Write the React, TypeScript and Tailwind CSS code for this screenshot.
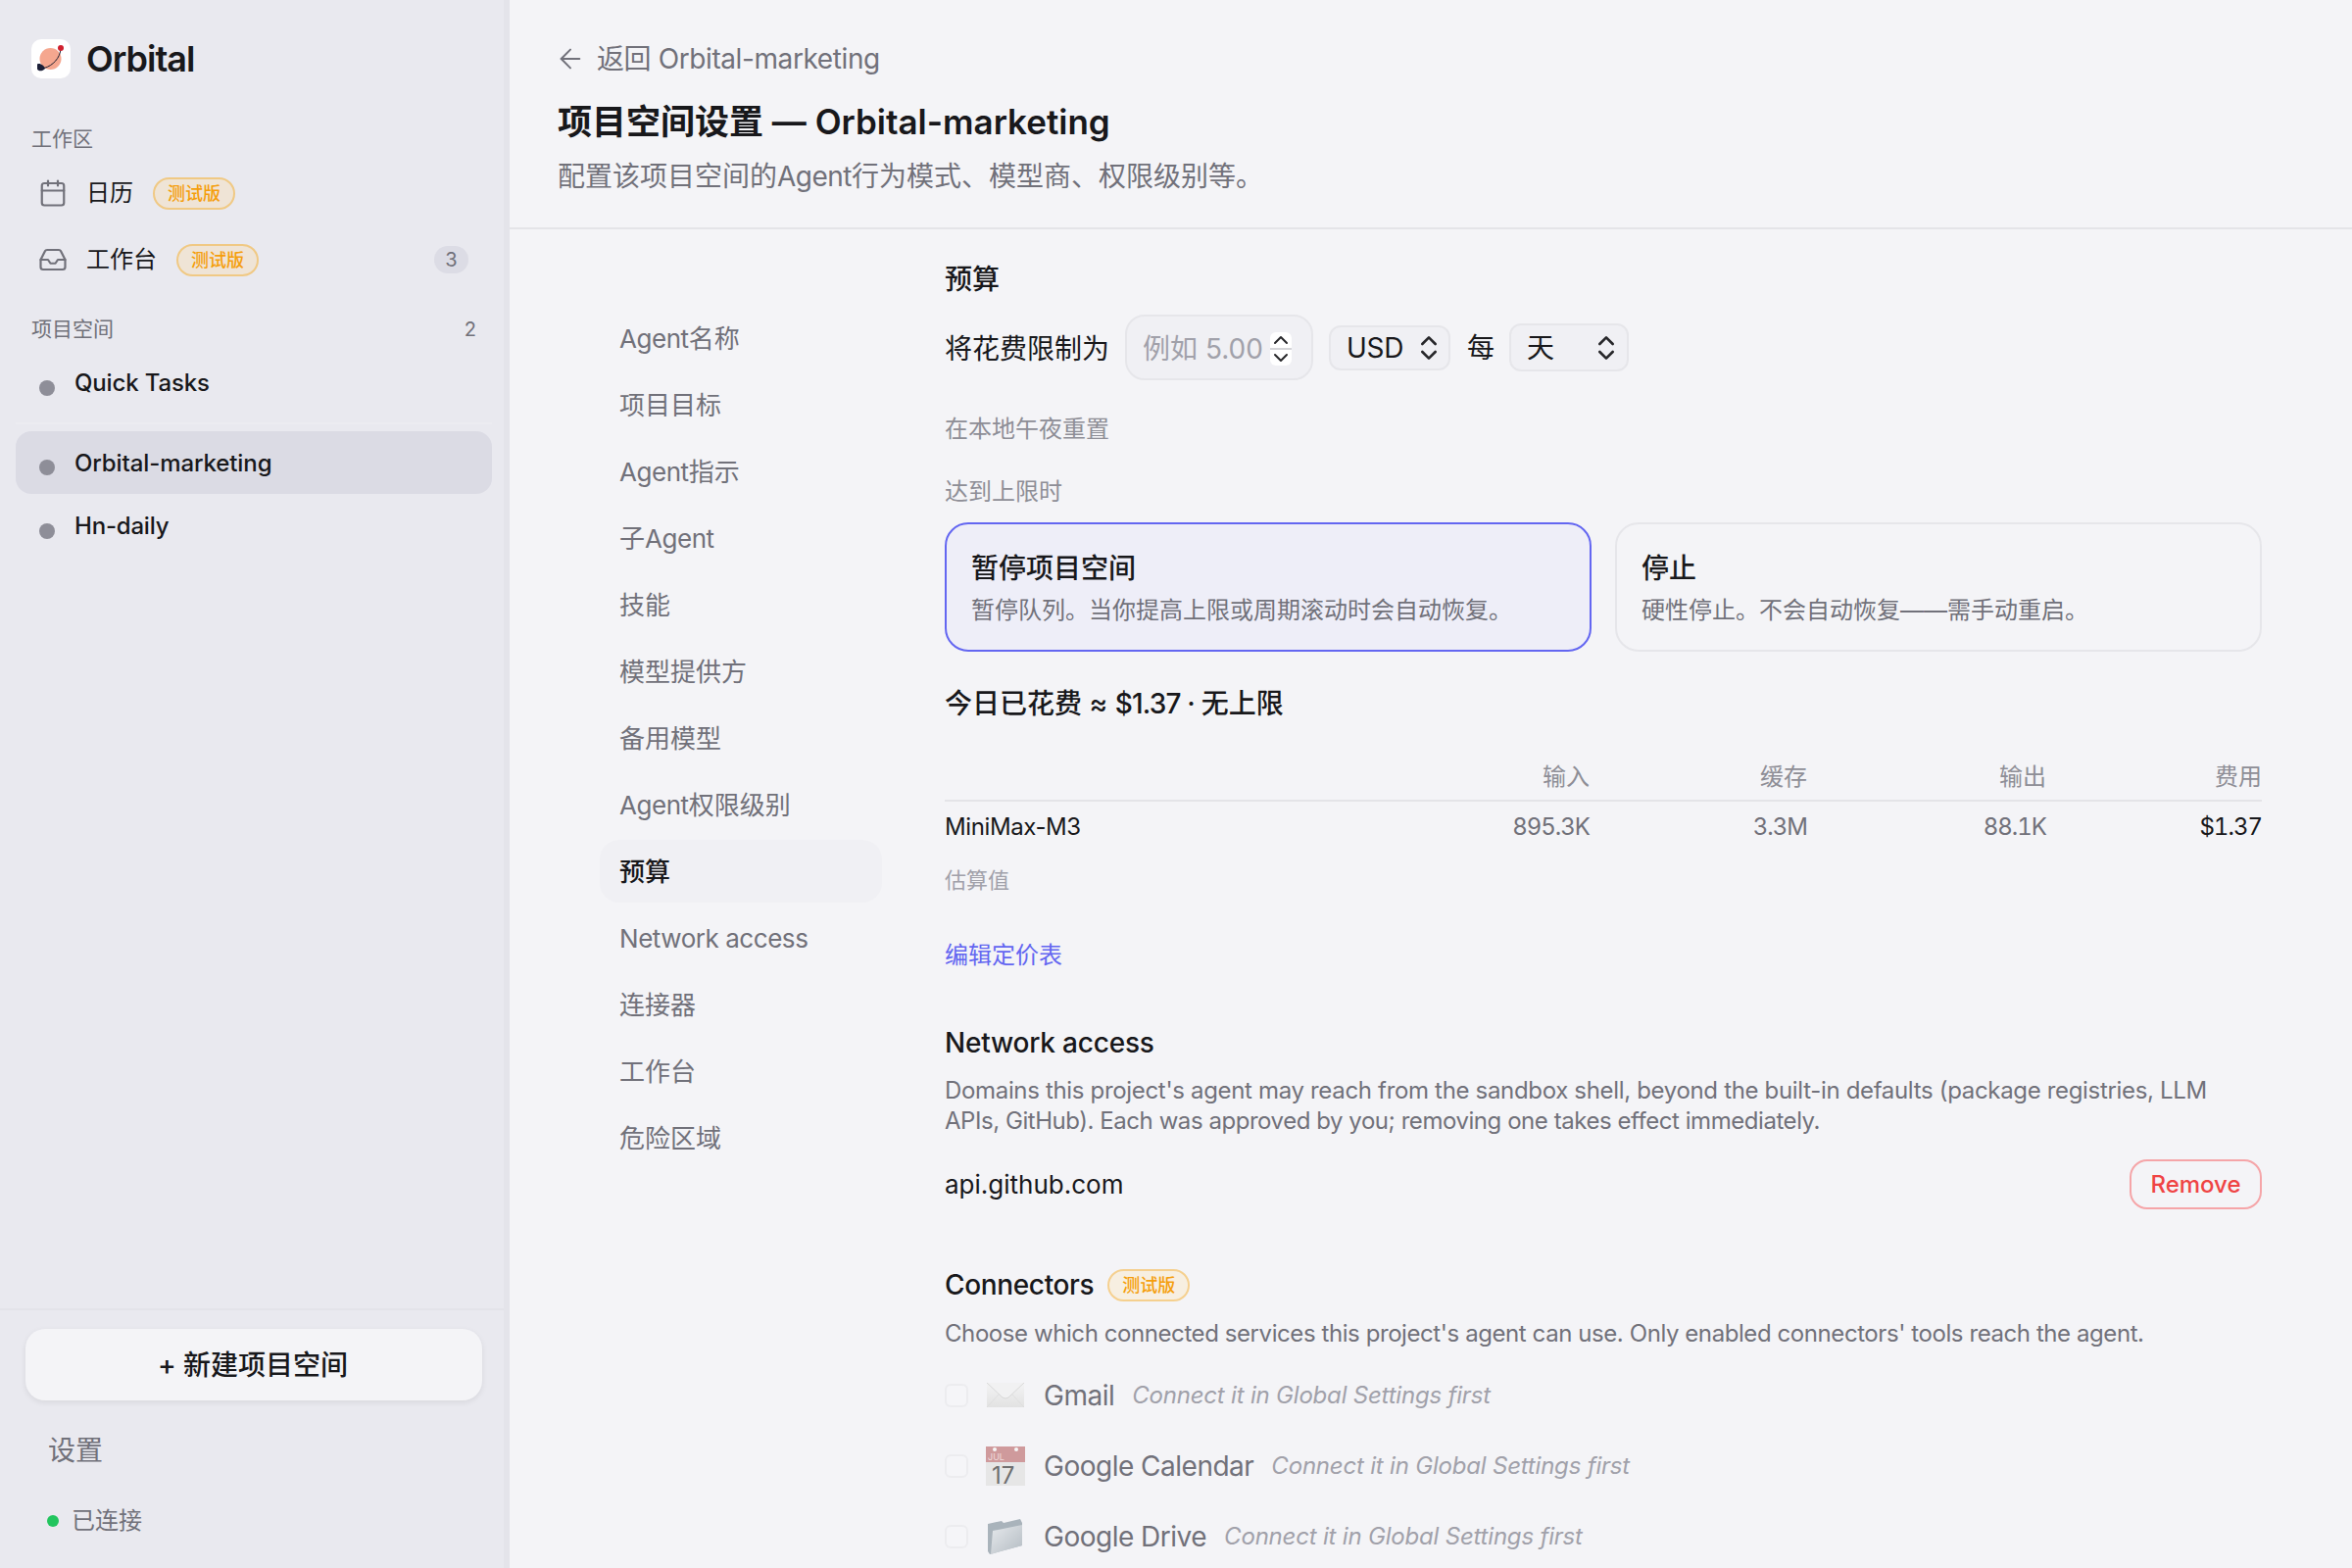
// App.tsx
// Project space settings page (budget section) with workspace sidebar

import { ArrowLeft, Calendar, ChevronDown, ChevronUp, ChevronsUpDown, Inbox } from "lucide-react";

const NAV_ITEMS = [
  { before: "", latin: "Agent", rest: "名称" },
  { before: "", latin: "", rest: "项目目标" },
  { before: "", latin: "Agent", rest: "指示" },
  { before: "子", latin: "Agent", rest: "" },
  { before: "", latin: "", rest: "技能" },
  { before: "", latin: "", rest: "模型提供方" },
  { before: "", latin: "", rest: "备用模型" },
  { before: "", latin: "Agent", rest: "权限级别" },
  { before: "", latin: "", rest: "预算" },
  { before: "", latin: "Network access", rest: "" },
  { before: "", latin: "", rest: "连接器" },
  { before: "", latin: "", rest: "工作台" },
  { before: "", latin: "", rest: "危险区域" },
];

function BetaBadge({ light = false }: { light?: boolean }) {
  return (
    <span
      className={
        light
          ? "flex h-[33px] w-[84px] shrink-0 items-center justify-center rounded-full border-2 border-[#f5d08f] bg-[#f7efe1] text-[18px] font-medium text-[#f59e0b]"
          : "flex h-[33px] w-[84px] shrink-0 items-center justify-center rounded-full border-2 border-[#f0c984] bg-[#efe4d6] text-[18px] font-medium text-[#f59e0b]"
      }
    >
      测试版
    </span>
  );
}

function OrbitalLogo() {
  return (
    <svg width="40" height="40" viewBox="0 0 40 40" className="shrink-0">
      <rect width="40" height="40" rx="10" fill="#ffffff" />
      <circle cx="19.5" cy="20" r="11" fill="#f5a78f" />
      <path d="M30 9.5C29.5 19 22 27 13 29.5" fill="none" stroke="#1e1e2e" strokeWidth="1" />
      <path d="M6 25.5C9 24 13 27 14 30C11.5 33 7 33 6 30.5Z" fill="#1c2038" />
      <circle cx="30" cy="9" r="3" fill="#d0202e" />
    </svg>
  );
}

function EnvelopeIcon() {
  return (
    <svg width="40" height="26" viewBox="0 0 40 26">
      <defs>
        <linearGradient id="env" x1="0" y1="0" x2="0" y2="1">
          <stop offset="0" stopColor="#f3f3f4" />
          <stop offset="1" stopColor="#e2e2e2" />
        </linearGradient>
      </defs>
      <rect x="1" y="0" width="38" height="25" fill="url(#env)" />
      <path d="M1 0L17 15Q20 17 23 15L39 0" fill="#f1f1f2" stroke="#d2d2d2" strokeWidth="0.8" />
      <path d="M1 25L14 11M39 25L26 11" fill="none" stroke="#dcdcdc" strokeWidth="0.8" />
    </svg>
  );
}

function CalendarEmoji() {
  return (
    <svg width="40" height="40" viewBox="0 0 40 40">
      <rect width="40" height="40" fill="#e6e6e6" />
      <rect width="40" height="16" fill="#cf9a9c" />
      <circle cx="9" cy="3" r="2" fill="#f6f6f6" />
      <circle cx="31" cy="3" r="2" fill="#f6f6f6" />
      <text x="2" y="14" fontSize="9" fill="#f0dcdc">JUL</text>
      <text x="6" y="38" fontSize="24" fill="#6f6f6f">17</text>
    </svg>
  );
}

function FolderIcon() {
  return (
    <svg width="38" height="38" viewBox="0 0 38 38">
      <defs>
        <linearGradient id="fold" x1="0" y1="0" x2="1" y2="1">
          <stop offset="0" stopColor="#e6e9ec" />
          <stop offset="1" stopColor="#b4bcc3" />
        </linearGradient>
      </defs>
      <path d="M1 6L15 3L17 5L34 1L36 5L36 28L3 37L1 34Z" fill="#a9b3bb" />
      <path d="M6 13L36 7L36 28L4 37Z" fill="url(#fold)" />
    </svg>
  );
}

function Connector({ name, icon }: { name: string; icon: React.ReactNode }) {
  return (
    <div className="flex h-[72px] items-center">
      <span className="h-6 w-6 shrink-0 rounded-[6px] border-2 border-[#ececef] bg-[#f5f5f8]" />
      <span className="ml-[18px] flex h-10 w-10 shrink-0 items-center justify-center">{icon}</span>
      <span className="ml-[19px] text-[28px] leading-10 tracking-[-0.5px] text-[#71717a]">{name}</span>
      <span className="ml-[18px] text-[24px] leading-8 italic tracking-[-0.2px] text-[#a1a1aa]">
        Connect it in Global Settings first
      </span>
    </div>
  );
}

export default function App() {
  return (
    <div className="flex h-[1600px] w-[2400px] overflow-hidden bg-[#f4f4f7] text-[#18181b] [font-family:Inter,'Noto_Sans_CJK_SC',sans-serif]">
      {/* SIDEBAR */}
      <aside className="flex h-full w-[520px] shrink-0 flex-col border-r-[6px] border-[#e4e4ea] bg-[#e9e9ef]">
        <div className="mt-10 flex h-10 items-center gap-4 pl-8">
          <OrbitalLogo />
          <span className="text-[36px] font-semibold tracking-[-1px]">Orbital</span>
        </div>

        <div className="mt-12 h-7 pl-8 text-[21px] leading-7 text-[#71717a]">工作区</div>
        <div className="mt-[9px] flex h-16 items-center pl-[39px] pr-[36px]">
          <Calendar size={30} strokeWidth={1.75} className="shrink-0 text-[#71717a]" />
          <span className="ml-[19px] text-[24px]">日历</span>
          <span className="ml-5">
            <BetaBadge />
          </span>
        </div>
        <div className="mt-1 flex h-16 items-center pl-[39px] pr-[36px]">
          <Inbox size={30} strokeWidth={1.75} className="shrink-0 text-[#71717a]" />
          <span className="ml-[19px] text-[24px]">工作台</span>
          <span className="ml-5">
            <BetaBadge />
          </span>
          <span className="ml-auto flex h-7 w-[35px] items-center justify-center rounded-full bg-[#dcdce5] text-[20px] text-[#71717a]">
            3
          </span>
        </div>

        <div className="mt-[25px] flex h-7 items-center justify-between pl-8 pr-[28px] text-[21px] text-[#71717a]">
          <span>项目空间</span>
          <span className="text-[20px]">2</span>
        </div>

        <div className="mt-[9px] flex h-16 items-center gap-5 pl-10">
          <span className="mt-[10px] h-4 w-4 shrink-0 rounded-full bg-[#8e8e98]" />
          <span className="text-[24px] font-medium tracking-[-0.15px]">Quick Tasks</span>
        </div>
        <div className="mx-4 mb-[7px] mt-2 h-[2px] w-[486px] bg-[#ececf1]" />
        <div className="mx-4 flex h-16 w-[486px] items-center gap-5 rounded-[16px] bg-[#dbdbe4] pl-6">
          <span className="mt-[10px] h-4 w-4 shrink-0 rounded-full bg-[#8e8e98]" />
          <span className="mt-[2px] text-[24px] font-medium tracking-[-0.1px]">Orbital-marketing</span>
        </div>
        <div className="mt-px flex h-16 items-center gap-5 pl-10">
          <span className="mt-[10px] h-4 w-4 shrink-0 rounded-full bg-[#8e8e98]" />
          <span className="text-[24px] font-medium tracking-[-0.2px]">Hn-daily</span>
        </div>

        <div className="mt-auto border-t-2 border-[#e3e3e9] pb-[28px]">
          <button className="mx-[26px] mt-[19px] flex h-[73px] w-[466px] items-center justify-center rounded-[20px] bg-[#f4f4f7] pr-[2px] text-[28px] font-medium shadow-[0_2px_6px_rgba(0,0,0,0.08)]">
            + 新建项目空间
          </button>
          <div className="mt-[31px] h-10 pl-[49px] text-[28px] leading-10 text-[#71717a]">设置</div>
          <div className="mt-8 flex h-10 items-center gap-[13px] pl-12 text-[24px] text-[#71717a]">
            <span className="h-3 w-3 rounded-full bg-[#22c55e]" />
            已连接
          </div>
        </div>
      </aside>

      {/* MAIN */}
      <main className="flex min-w-0 flex-1 flex-col">
        <header className="h-[234px] shrink-0 border-b-2 border-[#e4e4e8] pl-[49px]">
          <div className="mt-10 flex h-10 items-center text-[28px] text-[#71717a]">
            <ArrowLeft size={32} strokeWidth={1.5} className="-ml-[3px] shrink-0" />
            <span className="ml-[11px] tracking-[-0.4px]">返回 Orbital-marketing</span>
          </div>
          <h1 className="mt-6 h-10 text-[35px] font-semibold leading-10">项目空间设置 — Orbital-marketing</h1>
          <p className="mt-4 h-10 text-[28px] leading-10 text-[#71717a]">
            配置该项目空间的<span className="tracking-[-0.5px]">Agent</span>行为模式、模型商、权限级别等。
          </p>
        </header>

        <div className="flex min-h-0 flex-1 gap-16 px-[92px]">
          {/* SECTION NAV */}
          <nav className="flex w-[288px] shrink-0 flex-col gap-1 pt-[79px]">
            {NAV_ITEMS.map((item) => (
              <div
                key={item.before + item.latin + item.rest}
                className={
                  item.rest === "预算"
                    ? "flex h-16 items-center rounded-[20px] bg-[#f0f0f4] pl-5 text-[26px] font-medium text-[#18181b]"
                    : "flex h-16 items-center rounded-[20px] pl-5 text-[26px] text-[#71717a]"
                }
              >
                <span>
                  {item.before}
                  <span className="tracking-[-0.45px]">{item.latin}</span>
                  {item.rest}
                </span>
              </div>
            ))}
          </nav>

          {/* BUDGET */}
          <section className="w-[1344px] shrink-0 pt-[31px]">
            <h2 className="h-10 text-[28px] font-medium leading-10">预算</h2>

            <div className="mt-4 flex h-[67px] items-center text-[28px]">
              <span className="mt-[2px]">将花费限制为</span>
              <div className="relative ml-[16px]">
                <input
                  placeholder="例如 5.00"
                  className="h-[67px] w-[192px] rounded-[20px] border-2 border-[#e6e6ea] bg-[#f0f0f4] pl-4 pt-[2px] text-[28px] outline-none placeholder:text-[#a1a1aa]"
                />
                <div className="absolute left-[148px] top-[18px] flex h-[34px] w-[22px] flex-col items-center justify-center rounded-[6px] bg-white text-[#27272a]">
                  <div className="flex h-[16px] items-center justify-center">
                    <ChevronUp size={24} strokeWidth={2} />
                  </div>
                  <div className="h-[2px] w-full bg-[#d4d4d8]" />
                  <div className="flex h-[16px] items-center justify-center">
                    <ChevronDown size={24} strokeWidth={2} />
                  </div>
                </div>
              </div>
              <div className="ml-[16px] flex h-[46px] w-[124px] items-center justify-between rounded-[12px] border-2 border-[#e6e6ea] bg-[#f0f0f4] pl-[16px] pr-[4px]">
                <span className="tracking-[-0.3px]">USD</span>
                <ChevronsUpDown size={32} strokeWidth={2} className="text-[#27272a]" />
              </div>
              <span className="ml-[17px]">每</span>
              <div className="ml-[15px] flex h-[49px] w-[122px] items-center justify-between rounded-[12px] border-2 border-[#e6e6ea] bg-[#f0f0f4] pl-[16px] pr-[5px]">
                <span>天</span>
                <ChevronsUpDown size={32} strokeWidth={2} className="text-[#27272a]" />
              </div>
            </div>

            <p className="mt-[34px] h-8 text-[24px] leading-8 text-[#8e8e96]">在本地午夜重置</p>
            <p className="mt-8 h-8 text-[24px] leading-8 text-[#8e8e96]">达到上限时</p>

            <div className="mt-[15px] grid grid-cols-2 gap-6">
              <div className="h-[132px] rounded-[24px] border-2 border-[#6366f1] bg-[#eeeef8] pl-[25px] pt-[25px]">
                <div className="h-10 text-[28px] font-medium leading-10">暂停项目空间</div>
                <div className="mt-[7px] h-8 text-[24px] leading-8 text-[#71717a]">
                  暂停队列。当你提高上限或周期滚动时会自动恢复。
                </div>
              </div>
              <div className="h-[132px] rounded-[24px] border-2 border-[#e6e6ea] pl-[25px] pt-[25px]">
                <div className="h-10 text-[28px] font-medium leading-10">停止</div>
                <div className="mt-[7px] h-8 text-[24px] leading-8 text-[#71717a]">
                  硬性停止。不会自动恢复——需手动重启。
                </div>
              </div>
            </div>

            <div className="mt-[33px] h-10 text-[28px] font-medium leading-10">
              今日已花费 ≈ <span className="tracking-[-0.8px]">$1.37 · </span>无上限
            </div>

            {/* USAGE TABLE */}
            <div className="mt-[39px] grid h-[41px] grid-cols-[457px_201px_222px_244px_220px] border-b-2 border-[#e4e4e8] text-right text-[24px] leading-8 text-[#8e8e96]">
              <span />
              <span>输入</span>
              <span>缓存</span>
              <span>输出</span>
              <span>费用</span>
            </div>
            <div className="grid h-[51px] grid-cols-[457px_201px_222px_244px_220px] items-center text-right text-[24px] tabular-nums tracking-[-1px] text-[#71717a]">
              <span className="text-left normal-nums tracking-[-0.4px] text-[#18181b]">MiniMax-M3</span>
              <span>895.3K</span>
              <span>3.3M</span>
              <span>88.1K</span>
              <span className="text-[#18181b]">$1.37</span>
            </div>

            <p className="mt-[13px] h-8 text-[22px] leading-8 text-[#a1a1aa]">估算值</p>
            <p className="mt-[45px] h-8 text-[24px] leading-8 text-[#6366f1]">编辑定价表</p>

            {/* NETWORK ACCESS */}
            <h2 className="mt-[53px] h-10 text-[28px] font-medium leading-10 tracking-[-0.2px]">Network access</h2>
            <p className="mt-[13px] text-[24px] leading-[31px] tracking-[-0.33px] text-[#71717a]">
              Domains this project's agent may reach from the sandbox shell, beyond the built-in defaults (package registries, LLM{" "}
              <span className="tracking-[-0.45px]">APIs, GitHub). Each was approved by you; removing one takes effect immediately.</span>
            </p>
            <div className="mt-6 flex h-[51px] items-center justify-between">
              <span className="text-[26px]">api.github.com</span>
              <button className="flex h-[51px] w-[135px] items-center justify-center rounded-[18px] border-2 border-[#f5a5a8] text-[24px] font-medium text-[#ef4444]">
                Remove
              </button>
            </div>

            {/* CONNECTORS */}
            <div className="mt-[57px] flex h-10 items-center gap-[14px]">
              <h2 className="text-[28px] font-medium tracking-[-0.35px]">Connectors</h2>
              <BetaBadge light />
            </div>
            <p className="mt-[14px] h-8 text-[24px] leading-8 tracking-[-0.42px] text-[#71717a]">
              Choose which connected services this project's agent can use. Only enabled connectors' tools reach the agent.
            </p>
            <div className="mt-[11px]">
              <Connector name="Gmail" icon={<EnvelopeIcon />} />
              <Connector name="Google Calendar" icon={<CalendarEmoji />} />
              <Connector name="Google Drive" icon={<FolderIcon />} />
            </div>
          </section>
        </div>
      </main>
    </div>
  );
}
